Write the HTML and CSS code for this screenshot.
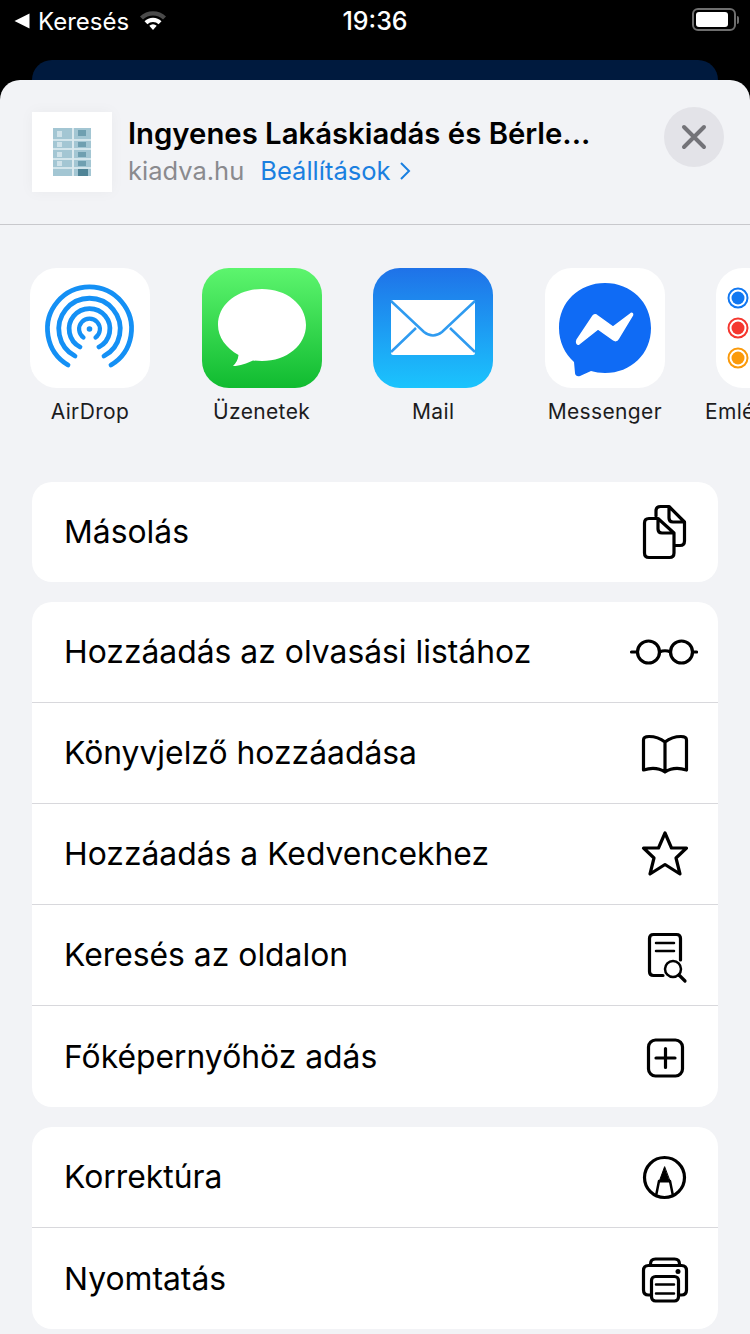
FILE: index.html
```html
<!DOCTYPE html>
<html lang="hu">
<head>
    <meta charset="UTF-8">
    <meta name="viewport" content="width=device-width, initial-scale=1.0">
    <title>Megosztás</title>
    <link rel="stylesheet" href="styles.css">
</head>
<body>
    <div class="status-bar">
        <div class="status-left">
            <svg class="back-arrow" width="16" height="16" viewBox="0 0 16 16"><path d="M15.500 0.500V15.500L0.500 8Z" fill="#fff"/></svg>
            <span>Keresés</span>
            <svg class="wifi" width="28" height="22" viewBox="0 0 28 22">
                <path d="M1 7.500A18.500 18.500 0 0 1 27 7.500L24 10.600A14.500 14.500 0 0 0 4 10.600Z" fill="#4a4a4a"/>
                <path d="M5.500 12.200A12 12 0 0 1 22.500 12.200L19.600 15.200A8 8 0 0 0 8.400 15.200Z" fill="#fff"/>
                <path d="M10.300 16.800A5.300 5.300 0 0 1 17.700 16.800L14 21Z" fill="#fff"/>
            </svg>
        </div>
        <div class="status-time">19:36</div>
        <div class="battery-wrap">
            <div class="battery"><div class="battery-fill"></div></div>
            <div class="battery-nub"></div>
        </div>
    </div>
    <div class="page-behind"></div>

    <div class="sheet">
        <div class="sheet-header">
            <div class="thumb">
                <svg width="38" height="48" viewBox="0 0 38 48">
                    <rect width="38" height="48" fill="#a3c6d3"/>
                    <path d="M0 12H38M0 21H38M0 31H38M0 40H38" stroke="#e4eff3" stroke-width="1.500"/>
                    <path d="M20 0V48" stroke="#dbe9ee" stroke-width="2"/>
                    <path d="M25 2h8v6h-8zM25 14h8v5h-8zM25 24h8v5h-8zM25 33h8v5h-8z" fill="#6f9fb0"/>
                    <path d="M4 3h5v6H4zM4 14h5v5H4zM4 24h5v5H4zM4 33h5v5H4z" fill="#cfe2e9"/>
                    <rect x="25" y="41" width="10" height="7" fill="#4f8496"/>
                </svg>
            </div>
            <div class="header-text">
                <div class="page-title">Ingyenes Lakáskiadás és Bérle...</div>
                <div class="page-sub">
                    <span class="domain">kiadva.hu</span>
                    <span class="settings">Beállítások</span>
                    <svg width="12" height="20" viewBox="0 0 12 20"><path d="M2 2L10 10L2 18" fill="none" stroke="#1a7fe0" stroke-width="2"/></svg>
                </div>
            </div>
            <div class="close-btn">
                <svg width="26" height="26" viewBox="0 0 26 26"><path d="M3 3L23 23M23 3L3 23" stroke="#737378" stroke-width="4" stroke-linecap="round"/></svg>
            </div>
        </div>

        <div class="apps">
            <div class="app">
                <div class="app-icon icon-white">
                    <svg width="120" height="120" viewBox="0 0 120 120" fill="none" stroke="#1490f5" stroke-width="4.800" stroke-linecap="round">
                        <path d="M38 97A42 42 0 1 1 81 97"/>
                        <path d="M45 88A30.700 30.700 0 1 1 74 88"/>
                        <path d="M50 79A20.400 20.400 0 1 1 69 79"/>
                        <path d="M53.500 69.500A10.400 10.400 0 1 1 65.500 69.500" stroke-width="4.200"/>
                        <circle cx="59.500" cy="61" r="2.800" fill="#1490f5" stroke="none"/>
                    </svg>
                </div>
                <div class="app-label">AirDrop</div>
            </div>
            <div class="app">
                <div class="app-icon icon-green">
                    <svg width="120" height="120" viewBox="0 0 120 120"><path d="M60 21C84 21 104 36 104 57C104 77 85 93 60 93C57 93 54 92.800 51 92.400C45 95 38 98 31 98C34 95 36 92 36.500 87C24 80 16 69 16 57C16 36 36 21 60 21Z" fill="#fff"/></svg>
                </div>
                <div class="app-label">Üzenetek</div>
            </div>
            <div class="app">
                <div class="app-icon icon-mail">
                    <svg width="120" height="120" viewBox="0 0 120 120">
                        <rect x="18" y="32" width="84" height="55" rx="2" fill="#fff"/>
                        <path d="M18 33L51 64Q60 71 69 64L102 33M18 84L43 60M102 84L77 60" fill="none" stroke="#2f9bf0" stroke-width="2.500"/>
                    </svg>
                </div>
                <div class="app-label">Mail</div>
            </div>
            <div class="app">
                <div class="app-icon icon-white">
                    <svg width="120" height="120" viewBox="0 0 120 120">
                        <path d="M60 15C86 15 106 34 106 60C106 86 86 105 60 105C55 105 50 104 46 103L35 108C32 109 30 107 30 105L29 94C20 86 14 74 14 60C14 34 34 15 60 15Z" fill="#0f6bf5"/>
                        <path d="M32 72L48 48C49 46.500 51 46.500 52 47.500L68 59L86 45.500C87 45 88 45.500 87.500 47L73 71C72 73 70 73 68.500 72L53 61L34 76C32 77 31 74 32 72Z" fill="#fff" stroke="#fff" stroke-width="1.500" stroke-linejoin="round"/>
                    </svg>
                </div>
                <div class="app-label">Messenger</div>
            </div>
            <div class="app">
                <div class="app-icon icon-white">
                    <svg width="120" height="120" viewBox="0 0 120 120" fill="none" stroke-width="2">
                        <circle cx="22" cy="30" r="9.500" stroke="#1278f2"/><circle cx="22" cy="30" r="6.500" fill="#1278f2" stroke="none"/>
                        <circle cx="22" cy="60" r="9.500" stroke="#f5372f"/><circle cx="22" cy="60" r="6.500" fill="#f5372f" stroke="none"/>
                        <circle cx="22" cy="90" r="9.500" stroke="#fb9a0b"/><circle cx="22" cy="90" r="6.500" fill="#fb9a0b" stroke="none"/>
                    </svg>
                </div>
                <div class="app-label app-label-long">Emlékeztetők</div>
            </div>
        </div>

        <div class="card">
            <div class="row row-short">
                <span>Másolás</span>
                <svg class="row-icon" width="60" height="60" viewBox="0 0 60 60">
                    <path d="M18 14V9Q18 4.500 22.500 4.500H31L46.500 20V39Q46.500 43.500 42 43.500H37M31 4.500V16Q31 20 35 20H46.500"/>
                    <path d="M6.500 21Q6.500 16.500 11 16.500H20L36 31V51Q36 55.500 31.500 55.500H11Q6.500 55.500 6.500 51ZM20 16.500V27Q20 31 24 31H36"/>
                </svg>
            </div>
        </div>

        <div class="card">
            <div class="row">
                <span>Hozzáadás az olvasási listához</span>
                <svg class="row-icon" width="70" height="60" viewBox="0 0 70 60">
                    <circle cx="20.500" cy="30" r="11"/><circle cx="53.500" cy="30" r="11"/>
                    <path d="M31.500 30Q37 27.500 42.500 30M3.500 30H9M65 30H68.500"/>
                </svg>
            </div>
            <div class="row">
                <span>Könyvjelző hozzáadása</span>
                <svg class="row-icon" width="60" height="60" viewBox="0 0 60 60">
                    <path d="M27 19Q20 13.500 11 13.500Q5.500 13.500 5.500 17V47Q18 43 27 49Q36 43 48.500 47V17Q48.500 13.500 43 13.500Q34 13.500 27 19V49"/>
                </svg>
            </div>
            <div class="row">
                <span>Hozzáadás a Kedvencekhez</span>
                <svg class="row-icon" width="60" height="60" viewBox="0 0 60 60">
                    <path d="M27 9L33.500 24H48.500L38 34L42 50L27 40.500L12 50L16 34L5.500 24H20.500Z"/>
                </svg>
            </div>
            <div class="row">
                <span>Keresés az oldalon</span>
                <svg class="row-icon" width="60" height="60" viewBox="0 0 60 60">
                    <path d="M25 50.500H15.500Q11.500 50.500 11.500 46.500V13.500Q11.500 9.500 15.500 9.500H38.500Q42.500 9.500 42.500 13.500V35"/>
                    <path d="M18 18H36M18 26H36" stroke-width="2.500"/>
                    <circle cx="35" cy="44" r="8" stroke-width="2.500"/>
                    <path d="M41 50L47 56"/>
                </svg>
            </div>
            <div class="row">
                <span>Főképernyőhöz adás</span>
                <svg class="row-icon" width="60" height="60" viewBox="0 0 60 60">
                    <rect x="10.500" y="13" width="34" height="36" rx="7"/>
                    <path d="M27.500 21.500V40.500M18 31H37"/>
                </svg>
            </div>
        </div>

        <div class="card">
            <div class="row">
                <span>Korrektúra</span>
                <svg class="row-icon" width="60" height="60" viewBox="0 0 60 60">
                    <circle cx="26.500" cy="30.500" r="20"/>
                    <path d="M21 34L18 49M32 34L35 49" stroke-width="2.500"/>
                    <path d="M26.500 20L21 35H32Z" fill="#000" stroke-width="1"/>
                </svg>
            </div>
            <div class="row">
                <span>Nyomtatás</span>
                <svg class="row-icon" width="60" height="60" viewBox="0 0 60 60">
                    <path d="M12.500 16V15Q12.500 10 17.500 10H36.500Q41.500 10 41.500 15V16"/>
                    <path d="M13 46H10.500Q5.500 46 5.500 41V21.500Q5.500 16.500 10.500 16.500H43.500Q48.500 16.500 48.500 21.500V41Q48.500 46 43.500 46H41"/>
                    <rect x="13.500" y="27.500" width="27" height="24.500" rx="4"/>
                    <path d="M18 35.500H36M18 44.500H36" stroke-width="2.500"/>
                    <circle cx="40" cy="22.500" r="2.500" fill="#000" stroke="none"/>
                </svg>
            </div>
        </div>
    </div>
</body>
</html>
```

FILE: styles.css
```css
* {
    box-sizing: border-box;
}
body {
    margin: 0;
    width: 750px;
    height: 1334px;
    overflow: hidden;
    background: #000;
    font-family: Inter, "Liberation Sans", sans-serif;
    color: #000;
}
.status-bar {
    height: 60px;
    display: grid;
    grid-template-columns: 1fr auto 1fr;
    align-items: start;
    padding: 8px 11px 0 11px;
    color: #fff;
}
.status-left {
    display: flex;
    align-items: center;
    height: 26px;
    font-size: 24px;
}
.back-arrow {
    margin: 0 8px 0 3px;
}
.wifi {
    margin-left: 10px;
    margin-bottom: 2px;
}
.status-time {
    font-size: 25px;
    font-weight: 500;
    line-height: 26px;
}
.battery-wrap {
    justify-self: end;
    display: flex;
    align-items: center;
    gap: 1px;
}
.battery {
    width: 44px;
    height: 23px;
    border: 2px solid #6e6e6e;
    border-radius: 6px;
    padding: 2px;
}
.battery-fill {
    width: 32px;
    height: 15px;
    background: #fff;
    border-radius: 3px;
}
.battery-nub {
    width: 2px;
    height: 8px;
    background: #6e6e6e;
    border-radius: 0 2px 2px 0;
}
.page-behind {
    height: 20px;
    margin: 0 32px;
    background: #001a3e;
    border-radius: 20px 20px 0 0;
}
.sheet {
    height: 1254px;
    background: #f2f3f6;
    border-radius: 20px 20px 0 0;
}
.sheet-header {
    height: 145px;
    display: flex;
    padding: 32px 26px 0 32px;
    border-bottom: 1px solid #c8c8cc;
}
.thumb {
    width: 80px;
    height: 80px;
    background: #fff;
    display: flex;
    align-items: center;
    justify-content: center;
    flex-shrink: 0;
    box-shadow: 0 0 14px rgba(0, 0, 0, 0.04);
}
.header-text {
    flex: 1;
    padding-left: 16px;
}
.page-title {
    font-size: 29.3px;
    font-weight: 600;
    line-height: 34px;
    margin-top: 5px;
    white-space: nowrap;
}
.page-sub {
    display: flex;
    align-items: center;
    font-size: 25.5px;
    line-height: 32px;
    margin-top: 4px;
}
.domain {
    color: #8a8a8e;
    margin-right: 16px;
}
.settings {
    color: #1a7fe0;
    margin-right: 9px;
}
.close-btn {
    width: 60px;
    height: 60px;
    border-radius: 50%;
    background: #e3e3e8;
    display: flex;
    align-items: center;
    justify-content: center;
    margin-top: -5px;
}
.apps {
    height: 257px;
    padding: 43px 0 0 30px;
    display: flex;
    gap: 51.6px;
    overflow: hidden;
}
.app {
    width: 120px;
    flex-shrink: 0;
    display: flex;
    flex-direction: column;
    align-items: center;
}
.app-icon {
    width: 120px;
    height: 120px;
    border-radius: 27px;
    overflow: hidden;
}
.icon-white {
    background: #fff;
}
.icon-green {
    background: linear-gradient(#5df56e, #10bb30);
}
.icon-mail {
    background: linear-gradient(#1f72e8, #1bc4fd);
}
.app-label {
    font-size: 21px;
    line-height: 26px;
    margin-top: 11px;
    letter-spacing: 0.35px;
    white-space: nowrap;
    color: #1c1c1e;
}
.app-label-long {
    margin-right: 6px;
}
.card {
    margin: 0 32px 20px;
    background: #fff;
    border-radius: 20px;
}
.row {
    height: 101px;
    padding: 0 20px 0 32px;
    display: flex;
    align-items: center;
    justify-content: space-between;
    font-size: 31.85px;
    border-bottom: 1px solid #d8d8dc;
}
.row:last-child {
    border-bottom: 0;
}
.row-short {
    height: 100px;
}
.row span {
    margin-top: -1px;
}
.row-icon {
    fill: none;
    stroke: #000;
    stroke-width: 3.2;
    stroke-linecap: round;
    stroke-linejoin: round;
    flex-shrink: 0;
}
```
